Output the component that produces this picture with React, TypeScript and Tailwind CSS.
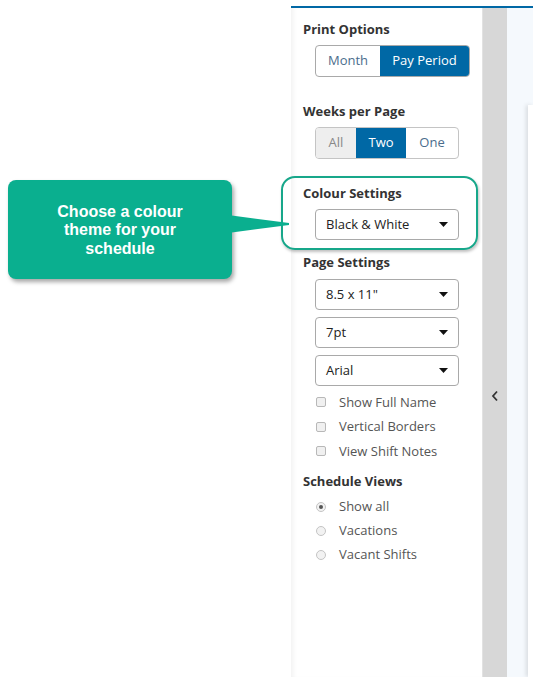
import React from 'react';

const font = { fontFamily: '"Open Sans", "Noto Sans", sans-serif' };

function Select({ value }: { value: string }) {
  return (
    <div className="flex h-[31px] w-[144px] items-center justify-between rounded-[4px] border border-[#a9a9a9] bg-white pl-[10px] pr-[10px] text-[13px] text-[#222]">
      <span>{value}</span>
      <svg width="9" height="5" viewBox="0 0 9 5">
        <path d="M0 0 L9 0 L4.5 5 Z" fill="#111" />
      </svg>
    </div>
  );
}

function Check({ label }: { label: string }) {
  return (
    <div className="flex h-[24.5px] items-center">
      <span className="ml-[13px] h-[10px] w-[10px] rounded-[2px] border border-[#b8b8b8] bg-[#f0f0f0]" />
      <span className="ml-[13px] text-[13px] text-[#555]">{label}</span>
    </div>
  );
}

function Radio({ label, checked }: { label: string; checked?: boolean }) {
  return (
    <div className="flex h-[24px] items-center">
      <span className="ml-[13px] flex h-[10px] w-[10px] items-center justify-center rounded-full border border-[#c4c4c4] bg-[#f2f2f2]">
        {checked && <span className="h-[4px] w-[4px] rounded-full bg-[#555]" />}
      </span>
      <span className="ml-[13px] text-[13px] text-[#555]">{label}</span>
    </div>
  );
}

export default function App() {
  return (
    <div className="relative flex h-[677px] w-[533px] overflow-hidden bg-white" style={font}>
      <div className="w-[291px] shrink-0 bg-white" />

      <div className="flex flex-1 flex-col">
        <div className="h-[6px] shrink-0 bg-white" />
        <div className="h-[2px] shrink-0 bg-[#0068a5]" />
        <div className="flex flex-1">
          {/* side panel */}
          <div className="flex w-[191px] shrink-0 flex-col bg-white pl-[12px] pt-[12px] shadow-[inset_5px_0_5px_-3px_rgba(0,0,0,0.06)]">
            <div className="text-[13px] font-bold leading-[18px] text-[#333]">Print Options</div>
            <div className="ml-[12px] mt-[7px] flex h-[32px] w-[155px] overflow-hidden rounded-[4px] border border-[#a9a9a9] text-[13px]">
              <div className="flex w-[64px] items-center justify-center text-[#4b6d8c]">Month</div>
              <div className="flex flex-1 items-center justify-center bg-[#0068a5] text-white">Pay Period</div>
            </div>

            <div className="mt-[25px] text-[13px] font-bold leading-[18px] text-[#333]">Weeks per Page</div>
            <div className="ml-[12px] mt-[7px] flex h-[32px] w-[144px] overflow-hidden rounded-[4px] border border-[#c4c4c4] text-[13px]">
              <div className="flex w-[40px] items-center justify-center bg-[#eeeeee] text-[#888]">All</div>
              <div className="flex w-[50px] items-center justify-center bg-[#0068a5] text-white">Two</div>
              <div className="flex flex-1 items-center justify-center text-[#4b6d8c]">One</div>
            </div>

            <div className="mt-[25px] text-[13px] font-bold leading-[18px] text-[#333]">Colour Settings</div>
            <div className="ml-[12px] mt-[7px]">
              <Select value="Black & White" />
            </div>

            <div className="mt-[13px] text-[13px] font-bold leading-[18px] text-[#333]">Page Settings</div>
            <div className="ml-[12px] mt-[8px] flex flex-col gap-[7px]">
              <Select value={'8.5 x 11"'} />
              <Select value="7pt" />
              <Select value="Arial" />
            </div>

            <div className="mt-[4px] flex flex-col">
              <Check label="Show Full Name" />
              <Check label="Vertical Borders" />
              <Check label="View Shift Notes" />
            </div>

            <div className="mt-[8px] text-[13px] font-bold leading-[18px] text-[#333]">Schedule Views</div>
            <div className="mt-[5px] flex flex-col">
              <Radio label="Show all" checked />
              <Radio label="Vacations" />
              <Radio label="Vacant Shifts" />
            </div>
          </div>

          {/* collapse strip */}
          <div className="flex w-[25px] shrink-0 justify-center border-l border-[#e2e2e2] bg-[#d7d7d7] pt-[382px]">
            <svg width="8" height="12" viewBox="0 0 8 12">
              <path d="M6 1.5 L2 6 L6 10.5" fill="none" stroke="#333" strokeWidth="1.8" />
            </svg>
          </div>

          {/* content edge */}
          <div className="flex flex-1 bg-[#f5f9fd] pt-[97px]">
            <div className="ml-[21px] flex-1 bg-white shadow-[-2px_0_4px_rgba(0,0,0,0.12)]" />
          </div>
        </div>
      </div>

      {/* highlight around colour settings */}
      <div className="absolute left-[281px] top-[176px] h-[74px] w-[197px] rounded-[14px] border-2 border-[#17a78a] shadow-[1px_2px_3px_rgba(0,0,0,0.25)]" />

      {/* callout */}
      <div className="absolute left-[8px] top-[180px] h-[99px] w-[224px]">
        <svg className="absolute left-[220px] top-[30px]" width="64" height="26" viewBox="0 0 64 26">
          <path d="M0 5 L61 13 L61 15 L0 23 Z" fill="#0aaf8f" />
        </svg>
        <div
          className="flex h-full w-full items-center justify-center rounded-[8px] bg-[#0aaf8f] px-4 pt-[2px] text-center text-[16px] font-bold leading-[18.5px] text-white shadow-[2px_3px_4px_rgba(0,0,0,0.35)]"
          style={{ fontFamily: '"Liberation Sans", Arial, sans-serif' }}
        >
          Choose a colour
          <br />
          theme for your
          <br />
          schedule
        </div>
      </div>
    </div>
  );
}
